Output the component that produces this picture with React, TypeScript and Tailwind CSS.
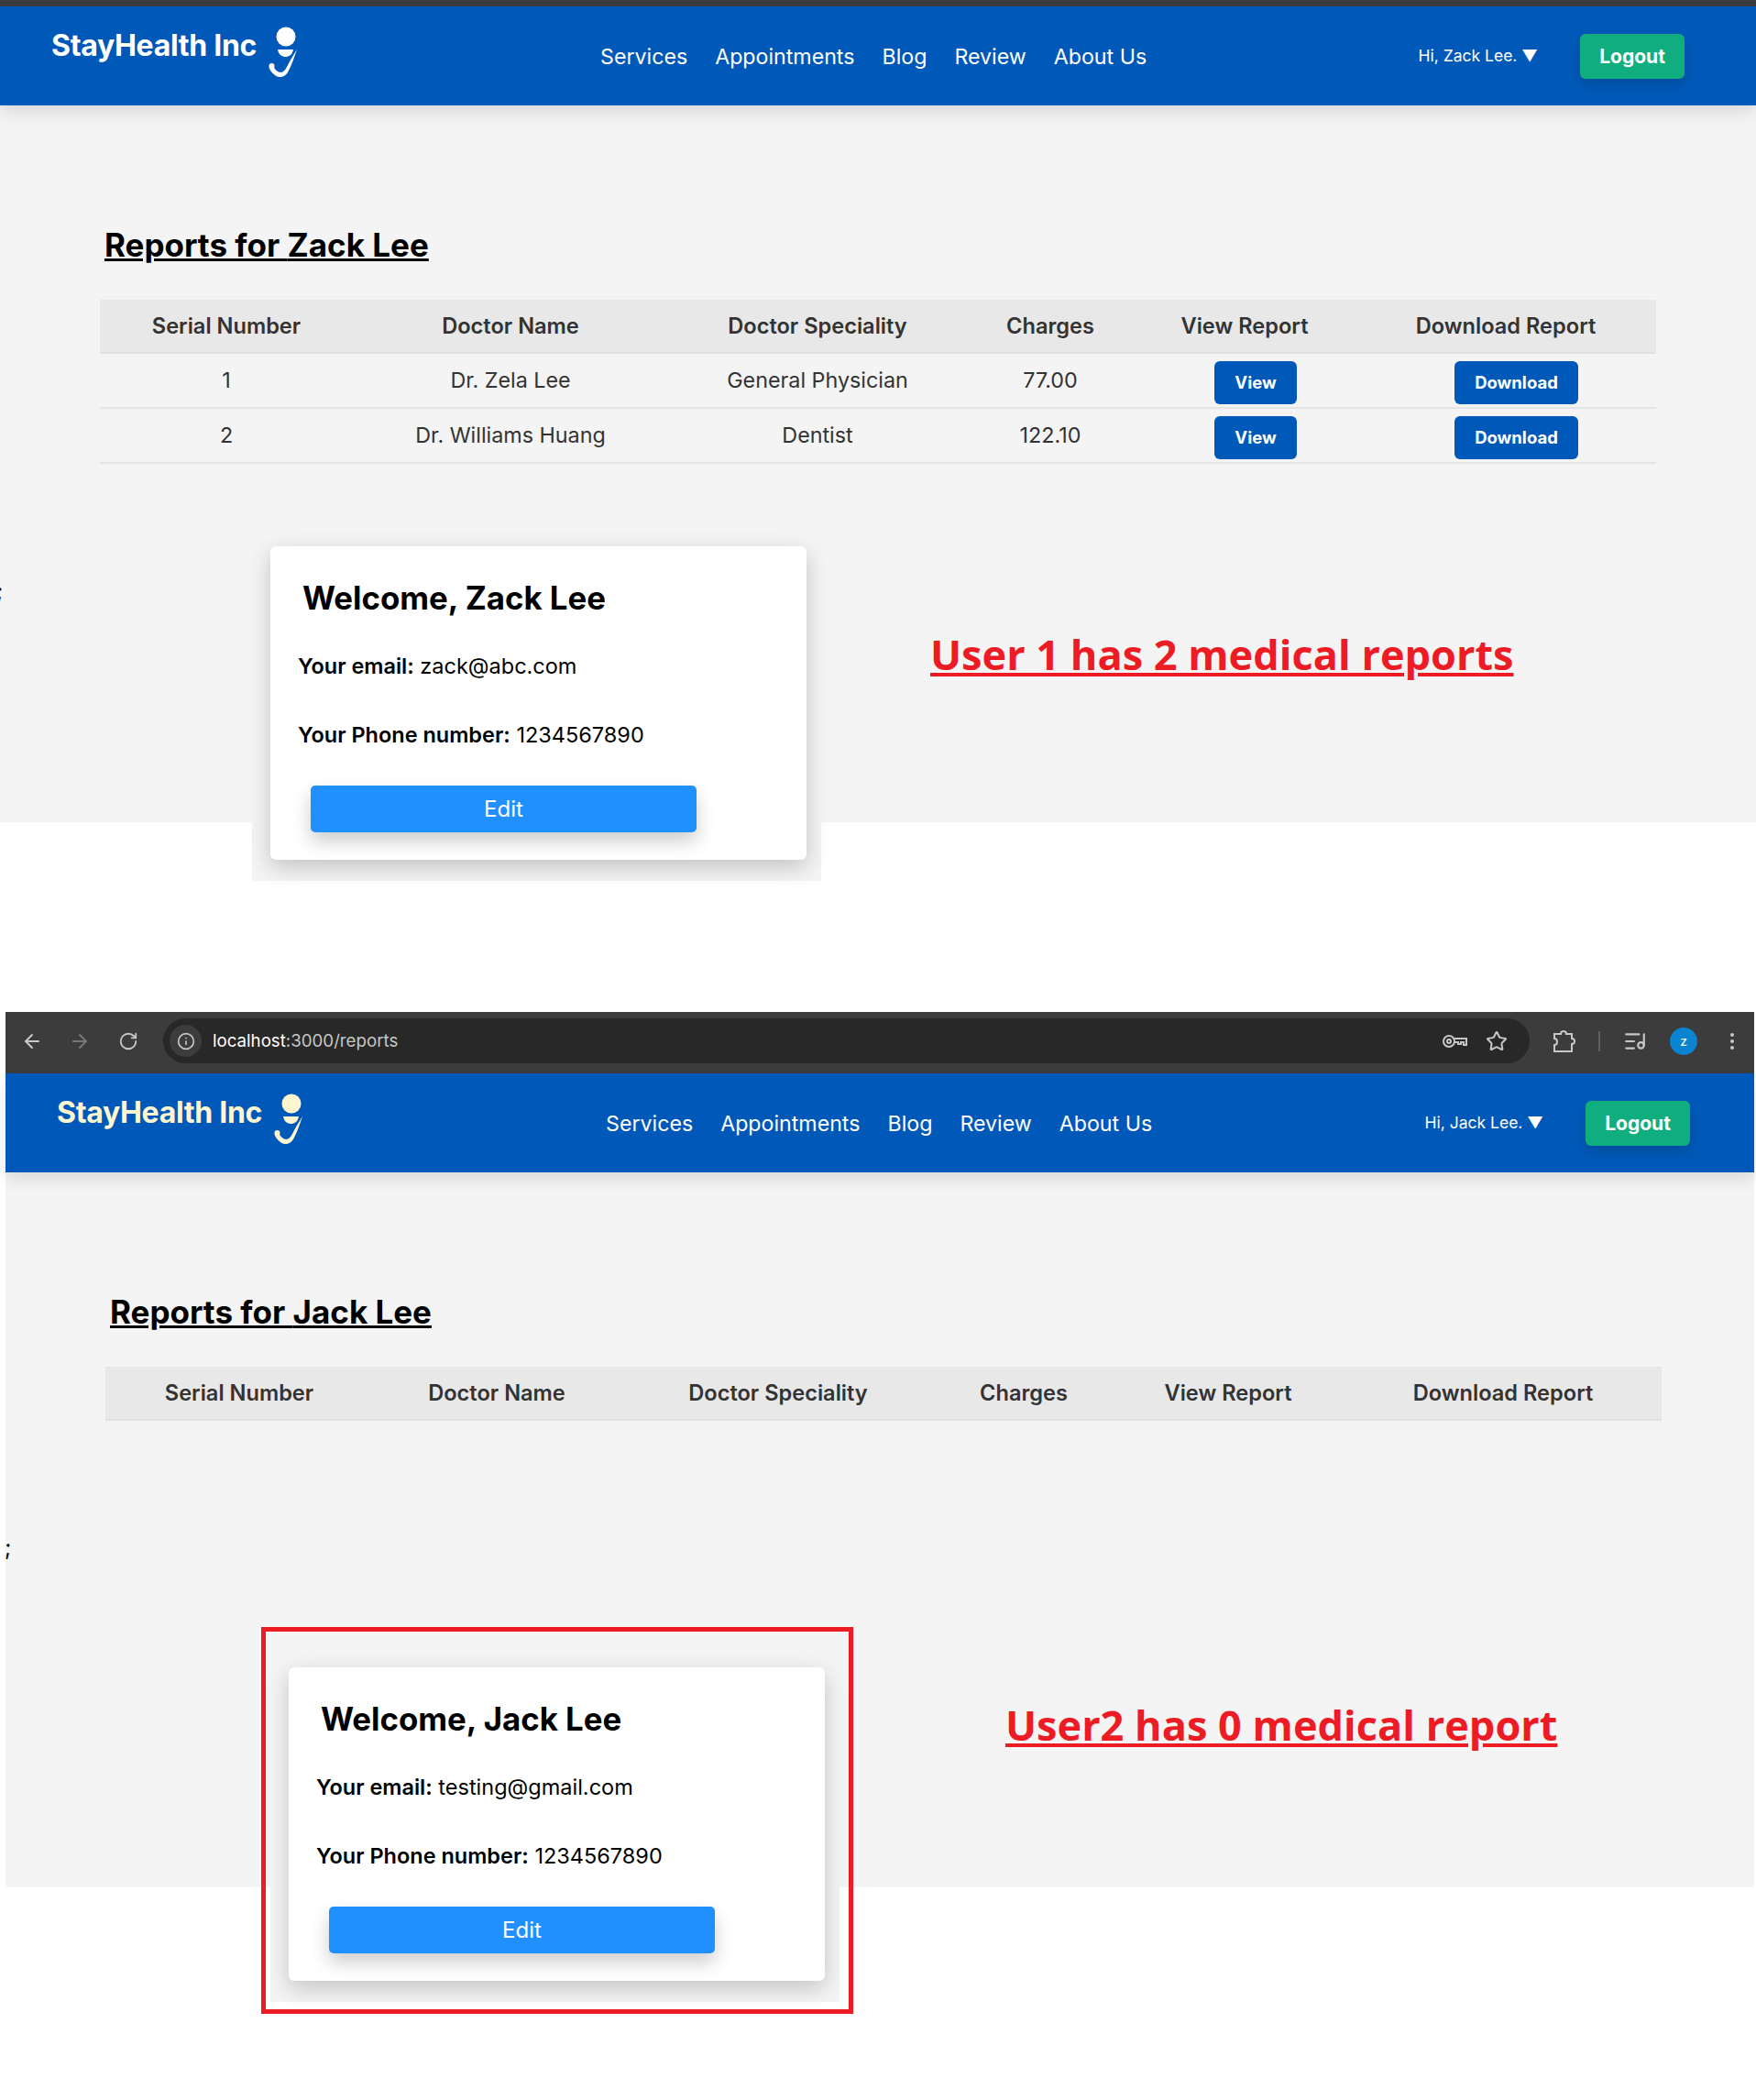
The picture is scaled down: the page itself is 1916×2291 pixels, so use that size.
import { ArrowLeft, ArrowRight, RotateCw, Info, Star, ListMusic, EllipsisVertical } from 'lucide-react';

const FONT = "font-['Inter',sans-serif]";

type Report = { doctor: string; speciality: string; charges: string };

// stethoscope-ish logo
function Logo({ color }: { color: string }) {
  return (
    <svg width="36" height="60" viewBox="0 0 36 60" className="ml-[10px] mt-[-4px]">
      <circle cx="22" cy="13" r="10.5" fill={color} />
      <path d="M13 27 H30 C29 33 25 35 21.5 35 C18 35 14 33 13 27 Z" fill={color} />
      <path d="M34 27 C31 36 28 44 25 50 C22 57 15 59 10 55 C6 52 4 49 3.5 46 L8 44.5 C9 47 11 50 14 51.5 C18 53 21 50 23 46 C26 40 30 33 34 27 Z" fill={color} />
      <circle cx="6.5" cy="45" r="3" fill={color} />
    </svg>
  );
}

function Navbar({ user, logoColor, logoutClass }: { user: string; logoColor: string; logoutClass: string }) {
  return (
    <nav className="relative flex h-[108px] items-center bg-[#0059b8] text-white shadow-[0_8px_16px_rgba(0,0,0,0.1)]">
      <div className="flex w-[599px] items-start pl-[56px] pb-[4px]">
        <span className="text-[32px] leading-[38px] font-bold tracking-[-0.3px]" style={{ color: logoColor }}>StayHealth Inc</span>
        <Logo color={logoColor} />
      </div>
      <ul className="flex gap-[30px] pl-[56px] pt-[2px] text-[23.2px]">
        <li>Services</li>
        <li>Appointments</li>
        <li>Blog</li>
        <li>Review</li>
        <li>About Us</li>
      </ul>
      <div className="ml-auto flex items-center">
        <span className="text-[17.5px]">Hi, {user}. ▼</span>
        <button className={`ml-[46px] h-[49px] w-[114px] rounded-[6px] bg-[#10ae7e] pt-[1px] text-[21px] font-bold shadow-[0_6px_14px_rgba(0,0,0,0.15)] ${logoutClass}`}>Logout</button>
      </div>
    </nav>
  );
}

function ReportsTable({ name, rows, cols }: { name: string; rows: Report[]; cols: number[] }) {
  return (
    <div className="px-[109px] pt-[130px]">
      <h2 className="pl-[5px] text-[35px] leading-[44px] font-bold text-black underline">Reports for {name}</h2>
      <table className="mt-[38px] w-full table-fixed text-center text-[23.3px] text-[#333333]">
        <colgroup>
          {cols.map((c, i) => <col key={i} style={{ width: c }} />)}
        </colgroup>
        <thead>
          <tr className="h-[58px] border-b-2 border-[#e0e0e0] bg-[#e8e8e8] text-[23.6px]">
            <th className="font-semibold">Serial Number</th>
            <th className="font-semibold">Doctor Name</th>
            <th className="font-semibold">Doctor Speciality</th>
            <th className="font-semibold">Charges</th>
            <th className="font-semibold">View Report</th>
            <th className="font-semibold">Download Report</th>
          </tr>
        </thead>
        <tbody>
          {rows.map((r, i) => (
            <tr key={i} className="h-[60px] border-b-2 border-[#e4e4e4]">
              <td>{i + 1}</td>
              <td>{r.doctor}</td>
              <td>{r.speciality}</td>
              <td>{r.charges}</td>
              <td className="pt-[5px]">
                <button className="ml-[24px] h-[47px] w-[90px] rounded-[6px] bg-[#0059b8] text-[18.5px] font-bold text-white">View</button>
              </td>
              <td className="pt-[5px]">
                <button className="ml-[23px] h-[47px] w-[135px] rounded-[6px] bg-[#0059b8] text-[18.5px] font-bold text-white">Download</button>
              </td>
            </tr>
          ))}
        </tbody>
      </table>
    </div>
  );
}

function ProfileCard({ name, email, className }: { name: string; email: string; className: string }) {
  return (
    <div className={`relative w-[621px] bg-[#f4f4f4] p-[20px] pr-[16px] pb-[23px] ${className}`}>
      <div className="h-[342px] w-[585px] rounded-[6px] bg-white pl-[30px] pt-[34px] text-[23.5px] text-black shadow-[0_8px_24px_rgba(0,0,0,0.2)]">
        <h3 className="pl-[5px] text-[34.8px] leading-[44px] font-bold">Welcome, {name}</h3>
        <p className="mt-[38px] leading-[30px]"><span className="font-semibold">Your email:</span> {email}</p>
        <p className="mt-[45px] leading-[30px]"><span className="font-semibold">Your Phone number:</span> 1234567890</p>
        <button className="mt-[40px] ml-[14px] h-[51px] w-[421px] rounded-[5px] bg-[#2190ff] text-[24px] text-white shadow-[0_10px_20px_rgba(0,0,0,0.2)]">Edit</button>
      </div>
    </div>
  );
}

function ChromeBar() {
  return (
    <div className="flex h-[67px] items-center bg-[#3c3c3c] pb-[4px] text-[#c7c7c7]">
      <ArrowLeft size={24} className="ml-[17px]" />
      <ArrowRight size={24} className="ml-[28px] text-[#777777]" />
      <RotateCw size={22} className="ml-[30px]" />
      <div className="ml-[27px] flex h-[49px] w-[1491px] items-center rounded-full bg-[#282828] pl-[7px] pr-[24px]">
        <span className="flex h-[35px] w-[35px] items-center justify-center rounded-full bg-[#3c3c3c]">
          <Info size={20} />
        </span>
        <span className="ml-[12px] pt-[2px] text-[18.7px]"><span className="text-white">localhost</span>:3000/reports</span>
        <svg width="28" height="18" viewBox="0 0 28 18" fill="none" stroke="currentColor" strokeWidth="2" className="ml-auto">
          <circle cx="8" cy="9" r="6" />
          <circle cx="8" cy="9" r="2" />
          <path d="M14 6 H27 V13 H24 V10 H21 V12 H18 V10 H14" />
        </svg>
        <Star size={24} className="ml-[20px]" />
      </div>
      <svg width="26" height="28" viewBox="0 0 26 28" fill="none" stroke="currentColor" strokeWidth="2" className="ml-[25px]">
        <path d="M2 6 H9 C9 2 15 2 15 6 H21 V11 C25 11 25 17 21 17 V25 H2 V18 C6 18 6 11 2 11 Z" />
      </svg>
      <div className="ml-[24px] h-[22px] w-[2px] bg-[#5f5f5f]" />
      <ListMusic size={26} className="ml-[25px]" />
      <span className="ml-[25px] flex h-[30px] w-[30px] items-center justify-center rounded-full bg-[#0a84d0] text-[14px] text-white">z</span>
      <EllipsisVertical size={24} className="ml-[26px]" />
    </div>
  );
}

const zackRows: Report[] = [
  { doctor: 'Dr. Zela Lee', speciality: 'General Physician', charges: '77.00' },
  { doctor: 'Dr. Williams Huang', speciality: 'Dentist', charges: '122.10' },
];

const ANNOTATION = "absolute font-['Open_Sans',sans-serif] text-[45.1px] leading-[60px] font-bold text-[#ed1c24] underline";

export default function App() {
  return (
    <div className={`relative min-h-[2291px] bg-white ${FONT}`}>
      {/* first capture */}
      <div className="h-[897px] bg-[#f4f4f4]">
        <div className="h-[7px] bg-[#3c3c3c]" />
        <Navbar user="Zack Lee" logoColor="#ffffff" logoutClass="mr-[78px]" />
        <ReportsTable name="Zack Lee" rows={zackRows} cols={[276, 344, 326, 182, 242, 328]} />
        <p className="mt-[122px] -ml-[4px] h-[30px] text-[24px]">;</p>
        <ProfileCard name="Zack Lee" email="zack@abc.com" className="ml-[275px] -mt-[82px]" />
        <p className={`${ANNOTATION} left-[1015px] top-[684px]`}>User 1 has 2 medical reports</p>
      </div>

      {/* second capture */}
      <div className="ml-[6px] mr-[2px] mt-[207px] h-[955px] bg-[#f4f4f4]">
        <ChromeBar />
        <Navbar user="Jack Lee" logoColor="#fff6cf" logoutClass="mr-[70px]" />
        <ReportsTable name="Jack Lee" rows={[]} cols={[292, 270, 344, 192, 254, 346]} />
        <p className="mt-[121px] -ml-[1px] h-[30px] text-[24px]">;</p>
        <ProfileCard name="Jack Lee" email="testing@gmail.com" className="ml-[289px] mt-[98px]" />
        <p className={`${ANNOTATION} left-[1097px] top-[1852px]`}>User2 has 0 medical report</p>
        <div className="absolute left-[285px] top-[1775px] h-[422px] w-[646px] border-[5px] border-[#ed1c24]" />
      </div>
    </div>
  );
}
